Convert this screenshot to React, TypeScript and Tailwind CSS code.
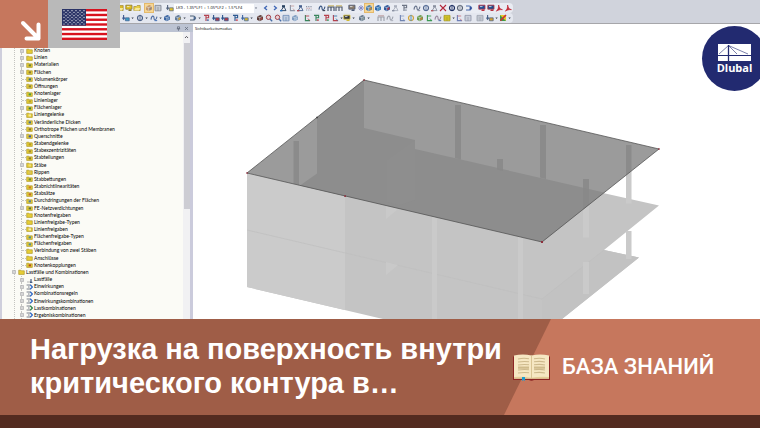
import { clsx } from "clsx";

type Tool = { name: string; kind: string; c: string; d?: string; on?: boolean; menu?: boolean };
type ToolGroup = { width: string; tools: Tool[] };

const t = (name: string, kind: string, c: string, d?: string, extra?: Partial<Tool>): Tool => ({
  name,
  kind,
  c,
  d,
  ...extra,
});

const fileTools: ToolGroup[] = [
  {
    width: "w-[25px]",
    tools: [
      t("Neu", "folder", "#d9b92c"),
      t("Öffnen", "screen", "#e3c21f", "#8a7a32"),
      t("Speichern", "folder", "#e8cf45"),
    ],
  },
  {
    width: "w-[17px]",
    tools: [t("Navigator", "cube", "#c79a6b", "#8c8684", { on: true }), t("Tabellen", "table", "#7a7f8c")],
  },
  { width: "w-2", tools: [t("Lastfall", "load", "#56657f", "#e0c02a")] },
];

const viewTools: ToolGroup[] = [
  {
    width: "w-[51px]",
    tools: [
      t("Zurück", "left", "#3f66b5"),
      t("Weiter", "right", "#3f66b5"),
      t("Lasten", "person", "#26405f", "#2a6fb8"),
      t("Werte", "axes", "#8c94a5", "#c4a2a2"),
      t("Ergebnisse", "person", "#46608d", "#b04a55"),
      t("Skala", "dots", "#8f97a8", "#c39aa0"),
    ],
  },
  {
    width: "w-[25px]",
    tools: [
      t("Brille", "curve", "#35527e", "#3a4152"),
      t("Verformung", "frame", "#3c4a63", "#c1a53d"),
      t("Schnitt", "frame", "#4c5668", "#c1a53d"),
    ],
  },
  {
    width: "w-[60px]",
    tools: [
      t("Modell", "screen", "#8c7d6b", "#4c5a76"),
      t("Optionen", "star", "#7d83bd"),
      t("Flächen", "cube", "#4f7ea7", "#c98a2c", { on: true }),
      t("Stäbe", "cube", "#2c66a8", "#4e9cc4"),
      t("Körper", "cube", "#2d579b", "#b8323e"),
      t("Lager", "person", "#aab0bd", "#8a91a2"),
      t("Text", "flag", "#6c7484", "#9aa2b1"),
    ],
  },
  {
    width: "w-[60px]",
    tools: [
      t("Drehen", "curve", "#65718a", "#8c94a5"),
      t("Kreis", "ring", "#51658d", "#5f7ca8"),
      t("Spiegeln", "person", "#8a91a0", "#b55b62"),
      t("Löschen", "cross", "#b2263a"),
      t("Kugel", "ring", "#1d2d5e", "#25366e"),
      t("Kamera", "ring", "#5b6475", "#8a8f99"),
      t("Filter", "arrow", "#4968ac", "#2f4f9b"),
    ],
  },
  {
    width: "w-[34px]",
    tools: [
      t("Bericht", "screen", "#1c4f97", "#c0303f"),
      t("Drucken", "screen", "#1d4d8c", "#b6323f"),
      t("PDF", "pdf", "#c02734"),
      t("Export", "pdf", "#c02734"),
    ],
  },
];

const modelTools: ToolGroup[] = [
  {
    width: "w-[63px]",
    tools: [
      t("Knoten setzen", "load", "#3e5b92", "#3e9cc0", { menu: true }),
      t("Linie setzen", "ring", "#4b6188", "#4b6188", { menu: true }),
      t("Stab setzen", "curve", "#4d6ba0", "#4d79b9", { menu: true }),
      t("Fläche setzen", "cube", "#3762a1", "#7a9cc4"),
      t("Körper setzen", "cube", "#5d7796", "#d4a63a", { menu: true }),
    ],
  },
  {
    width: "w-[63px]",
    tools: [
      t("Bogen", "arrow", "#4a6077", "#4c6a94", { menu: true }),
      t("Knotenlast", "flag", "#b44451", "#4466a3"),
      t("Linienlast", "load", "#31558b", "#b23c47"),
      t("Stablast", "load", "#2d568f", "#b23c47"),
      t("Flächenlast", "flag", "#2e5a91", "#cc4650"),
      t("Freie Last", "load", "#3e67a2", "#d3b238", { menu: true }),
    ],
  },
  {
    width: "w-[43px]",
    tools: [
      t("Auswahl", "cube", "#5b3a35", "#a64442"),
      t("Zoom", "zoom", "#a3434b", "#456ca5"),
      t("Zoom Fenster", "zoom", "#a3434b", "#456ca5"),
      t("Ansicht", "table", "#6788b2"),
      t("Isometrie", "cube", "#7d9bc0", "#b1c6dc"),
    ],
  },
  {
    width: "w-[51px]",
    tools: [
      t("Ansicht X", "axes", "#39855c", "#b6424d"),
      t("Ansicht Y", "flag", "#39855c", "#b6424d"),
      t("Ansicht Z", "flag", "#b6424d", "#39955c"),
      t("Ansicht -X", "axes", "#b6424d", "#3c78aa", { menu: true }),
      t("Raster", "screen", "#31333a", "#d1ba33", { menu: true }),
    ],
  },
  { width: "w-[15px]", tools: [t("Netz", "cube", "#64788a", "#8fa3a1", { menu: true })] },
  { width: "w-[17px]", tools: [t("Rahmen", "frame", "#9a9fa8", "#b48c8c"), t("Platte", "curve", "#9ba0ab", "#b0b4be")] },
  {
    width: "w-[74px]",
    tools: [
      t("Achsen", "axes", "#6f83b0", "#8fa1c9"),
      t("Spannung", "ring", "#d1a339", "#3e91c8"),
      t("Farben", "cube", "#6a9c4a", "#c97c3d"),
      t("Richtung", "axes", "#3d9a53", "#3d9a53"),
      t("Verlauf", "curve", "#9a8ba0", "#5f79b3"),
      t("Matrix", "table", "#a49a24", "#e2d02e", { menu: true }),
      t("Koordinaten", "axes", "#6d7fb7", "#c57681"),
      t("Gitter", "table", "#8a92a4"),
    ],
  },
  {
    width: "w-[34px]",
    tools: [
      t("Dokument", "table", "#9aa1ad", "#d1d5de"),
      t("Bearbeiten", "load", "#465f86", "#d1a030", { menu: true }),
      t("Isoflächen", "palette", "#c8313a", "#e7c927", { menu: true }),
    ],
  },
];

type Node = { label: string; icon?: string; open?: boolean; root?: boolean };

const tree: Node[] = [
  { label: "Knoten", open: true },
  { label: "Linien", open: true },
  { label: "Materialien", icon: "#6f7d3a", open: true },
  { label: "Flächen", icon: "#8a7a34", open: true },
  { label: "Volumenkörper", icon: "#3c6c86" },
  { label: "Öffnungen", icon: "#86803f" },
  { label: "Knotenlager", icon: "#4d9a3d" },
  { label: "Linienlager", icon: "#b5a02c" },
  { label: "Flächenlager", icon: "#3f7f3a", open: true },
  { label: "Liniengelenke", icon: "#f4e9a0" },
  { label: "Veränderliche Dicken", icon: "#47708f" },
  { label: "Orthotrope Flächen und Membranen", icon: "#8b7433" },
  { label: "Querschnitte", icon: "#3f55a8", open: true },
  { label: "Stabendgelenke", icon: "#b69b1e" },
  { label: "Stabexzentrizitäten", icon: "#a08a30" },
  { label: "Stabteilungen", icon: "#8b7a2a" },
  { label: "Stäbe", icon: "#f1de77", open: true },
  { label: "Rippen", icon: "#d8c262" },
  { label: "Stabbettungen", icon: "#6f8c39" },
  { label: "Stabnichtlinearitäten", icon: "#c9792a" },
  { label: "Stabsätze", icon: "#c0672c" },
  { label: "Durchdringungen der Flächen", icon: "#54819c" },
  { label: "FE-Netzverdichtungen", icon: "#5b6f3f", open: true },
  { label: "Knotenfreigaben" },
  { label: "Linienfreigabe-Typen" },
  { label: "Linienfreigaben", icon: "#f1e9b8" },
  { label: "Flächenfreigabe-Typen", icon: "#4f8a94" },
  { label: "Flächenfreigaben", icon: "#4f8a94" },
  { label: "Verbindung von zwei Stäben" },
  { label: "Anschlüsse" },
  { label: "Knotenkopplungen", icon: "#b0501f" },
  { label: "Lastfälle und Kombinationen", open: true, root: true },
  { label: "Lastfälle", icon: "load", open: true },
  { label: "Einwirkungen", icon: "combo-blue", open: true },
  { label: "Kombinationsregeln", icon: "combo-blue", open: true },
  { label: "Einwirkungskombinationen", icon: "combo-blue", open: true },
  { label: "Lastkombinationen", icon: "combo-green", open: true },
  { label: "Ergebniskombinationen", icon: "combo-blue", open: true },
];

const ToolIcon = ({ kind, c, d = c }: { kind: string; c: string; d?: string }) => (
  <svg viewBox="0 0 8 8" className="h-2 w-2 shrink-0" fill="none" stroke={c} strokeWidth="1.1">
    {kind === "folder" && (
      <>
        <path d="M.8 2.5h2.4l1-1h3v5H.8z" fill={c} stroke="#9a8127" strokeWidth=".6" />
        <path d="M2.6 4h4.6L6 6.6H1z" fill="#f6e89b" stroke="none" />
      </>
    )}
    {kind === "screen" && (
      <>
        <path d="M.8 1.2h6.2v4H.8z" fill={c} stroke={d} strokeWidth=".8" />
        <path d="M3 7l2-2 2 2z" fill={d} stroke="none" />
        <path d="M2 2.6h2.5" stroke="#e9eef5" strokeWidth=".8" />
      </>
    )}
    {kind === "cube" && (
      <>
        <path d="M1 2.6L4.5 1 7 2.2v3.4L3.8 7.2 1 5.8z" fill={c} stroke="none" />
        <path d="M1 2.6l2.8 1L7 2.2M3.8 3.6v3.6" stroke="#dfe5ec" strokeWidth=".6" />
        <path d="M4.4 4l2-.8v2l-2 1z" fill={d} stroke="none" />
      </>
    )}
    {kind === "table" && (
      <>
        <path d="M1 1.4h6v5.4H1z" fill={d === c ? "#e6eaf1" : d} strokeWidth=".8" />
        <path d="M1 3h6M1 5h6M4 3v4" strokeWidth=".6" />
      </>
    )}
    {kind === "load" && (
      <>
        <path d="M1.6 1v3.8M.5 3.6l1.1 1.6 1.2-1.6" />
        <path d="M3.4 3.8h3.8v3H3.4z" fill={d} strokeWidth=".7" />
      </>
    )}
    {kind === "person" && (
      <>
        <path d="M3 1.2h3v2.3H3z" fill={c} stroke="none" />
        <path d="M4.4 3.2L2 6.6h5L5.4 3.4" strokeWidth=".9" />
        <path d="M1 6h2.4v1.4H1z" fill={d} stroke="none" />
      </>
    )}
    {kind === "axes" && (
      <>
        <path d="M2.4 1v5.6H7" />
        <path d="M2.6 2h3.6M5 4.6l1.8 2" stroke={d} strokeWidth=".9" />
      </>
    )}
    {kind === "dots" && (
      <>
        <path d="M1 2.6h6M1 6h6" strokeDasharray="1 .8" />
        <path d="M1.4 4.2h5" stroke={d} strokeDasharray="1.4 .8" />
      </>
    )}
    {kind === "curve" && (
      <>
        <path d="M1 5.6C1.6 1 4 1.4 4 4s2 3 3-1.4" />
        <path d="M4.6 6.6h2.6" stroke={d} />
      </>
    )}
    {kind === "frame" && (
      <>
        <path d="M1 7V3h6v4M4 3v4" />
        <path d="M1 1.8h6" stroke={d} strokeWidth=".8" />
      </>
    )}
    {kind === "star" && <path d="M4 1v6M1 4h6M2 2l4 4M6 2L2 6" strokeWidth=".8" />}
    {kind === "flag" && (
      <>
        <path d="M2 1.4h4.6v2.4H4M4 2v5" />
        <path d="M4.8 5.4h2v1.4h-2z" fill={d} stroke="none" />
      </>
    )}
    {kind === "ring" && (
      <>
        <circle cx="4" cy="4" r="2.5" strokeWidth="1.2" />
        <path d="M4 .8v6.4" stroke={d} strokeWidth=".9" />
      </>
    )}
    {kind === "cross" && <path d="M1 1l6 6M7 1L1 7" strokeWidth="1.1" />}
    {kind === "arrow" && (
      <>
        <path d="M1 2h3c3 0 3 4 0 4H1" />
        <path d="M4.6 2.4L7.4 4 4.6 6z" fill={d} stroke="none" />
      </>
    )}
    {kind === "zoom" && (
      <>
        <circle cx="3.5" cy="3.3" r="2.2" strokeWidth="1" fill="#e6cfd4" />
        <path d="M5 5l2.2 2.2" stroke={d} strokeWidth="1.3" />
      </>
    )}
    {kind === "pdf" && <path d="M3.6 1c.6 3 1.6 4.4 3.8 4.6C5 5.4 3 6 1.4 7.2 3 5.4 3.8 3.8 3.6 1z" fill={c} strokeWidth=".7" />}
    {kind === "palette" && (
      <>
        <path d="M1 1h6v6H1z" fill={d} stroke="none" />
        <path d="M1 1l6 6H1z" fill="#3d9a4c" stroke="none" />
        <path d="M7 1L1.4 6.6" strokeWidth="1.6" />
      </>
    )}
    {kind === "left" && <path d="M5 2L2.6 4 5 6" strokeWidth="1.3" />}
    {kind === "right" && <path d="M3 2l2.4 2L3 6" strokeWidth="1.3" />}
  </svg>
);

const ToolButtons = ({ groups }: { groups: ToolGroup[] }) => (
  <>
    {groups.map((group, i) => (
      <div key={i} className={clsx("flex shrink-0 justify-between", group.width)}>
        {group.tools.map((tool) => (
          <button
            key={tool.name}
            aria-label={tool.name}
            className={clsx("flex items-center", tool.on && "bg-[#f6d795] ring-1 ring-[#e5b96b]")}
          >
            <ToolIcon kind={tool.kind} c={tool.c} d={tool.d} />
            {tool.menu && (
              <svg viewBox="0 0 4 4" className="-mr-px h-1 w-1">
                <path d="M1.4 1.5h2.4L2.6 3z" fill="#3f4654" />
              </svg>
            )}
          </button>
        ))}
      </div>
    ))}
  </>
);

const Toolbars = () => (
  <div className="border-b border-[#a6a6aa] bg-[#d0d3dc] pt-[3px]">
    <div className="flex h-[10px] w-[513px] items-center rounded-r-sm bg-[#e9ecf3] pl-[116px]">
      <div className="flex shrink-0 items-center gap-1">
        <ToolButtons groups={fileTools} />
      </div>
      <select
        aria-label="Lastkombination"
        className="h-[9px] w-20 shrink-0 appearance-none bg-white pl-[2px] text-[4px] leading-none text-black"
      >
        <option>LK9 - 1.35*LF1 + 1.05*LF2 + 1.5*LF4</option>
      </select>
      <svg viewBox="0 0 4 4" className="h-1 w-1 shrink-0">
        <path d="M.8 1.5h2.4L2 3z" fill="#6b7180" />
      </svg>
      <div className="ml-1 flex items-center gap-[5px]">
        <ToolButtons groups={viewTools} />
      </div>
    </div>
    <div className="flex h-[10px] w-[513px] items-center gap-1 rounded-r-sm bg-[#e4e7ef] pl-[122px]">
      <ToolButtons groups={modelTools} />
    </div>
  </div>
);

const NodeIcon = ({ icon }: { icon?: string }) => {
  if (icon === "load") {
    return (
      <svg viewBox="0 0 7 6" className="h-[6px] w-[7px] shrink-0" fill="none">
        <path d="M1 5h4" stroke="#9a9a9a" strokeWidth=".7" />
        <path d="M5 2v3.4M4 5.3h2.4" stroke="#27416f" />
      </svg>
    );
  }
  if (icon?.startsWith("combo")) {
    return (
      <svg viewBox="0 0 7 6" className="h-[6px] w-[7px] shrink-0" fill="none">
        <path d="M.6 1h3.8M.6 5h3.8M2 3h1.6" stroke="#59616e" strokeWidth=".8" />
        <path d="M4.2.8L6.4 3 4.2 5.2" stroke={icon === "combo-green" ? "#2e8446" : "#2f68c4"} strokeWidth="1.3" />
      </svg>
    );
  }
  return (
    <svg viewBox="0 0 7 6" className="h-[6px] w-[7px] shrink-0">
      <path d="M.7 1.2h2.2l.6.6h2.8v3.6H.7z" fill="#e6cd35" stroke="#a58f22" strokeWidth=".6" />
      {icon && <path d="M2.6 2.4h2.4v2H2.6z" fill={icon} />}
    </svg>
  );
};

const TreePane = () => (
  <aside className="flex w-[193px] shrink-0 flex-col border-l-2 border-[#cfcfdc] bg-[#cbcbdc]">
    <div className="flex h-2 items-center justify-end gap-[3px] bg-[#bcc3d2] pr-1">
      <button aria-label="Anheften" className="flex">
        <svg viewBox="0 0 5 5" className="h-[5px] w-[5px]" fill="none" stroke="#5d6577" strokeWidth=".7">
          <path d="M1.5.8h2v2h-2zM.8 2.8h3.4M2.5 2.8v2" />
        </svg>
      </button>
      <button aria-label="Schließen" className="flex">
        <svg viewBox="0 0 5 5" className="h-[5px] w-[5px]" stroke="#5d6577" strokeWidth=".7">
          <path d="M1 1l3 3M4 1L1 4" />
        </svg>
      </button>
    </div>
    <div className="mr-[3px] flex flex-1 bg-[#fbfbf6]">
      <ul className="ml-3 flex flex-1 flex-col border-l border-dotted border-[#c4c4c0] pt-[15px] font-['Lato','Open_Sans',sans-serif]">
        {tree.map((node) => (
          <li
            key={node.label}
            className={clsx(
              "flex flex-1 items-center text-[5px] leading-[7px] whitespace-nowrap text-black",
              !node.root && "pl-[6px]"
            )}
          >
            <span
              className={clsx(
                "flex h-full w-[5px] shrink-0 items-center",
                node.root ? "-ml-[3px]" : "border-l border-dotted border-[#c4c4c0]"
              )}
            >
              {node.open ? (
                <svg viewBox="0 0 4 4" className={clsx("h-1 w-1 shrink-0", !node.root && "-ml-[2px]")}>
                  <path d="M.5.5h3v3h-3z" fill="#f2f2f2" stroke="#9c9ca0" strokeWidth=".6" />
                  <path d="M1.2 2h1.6" stroke="#666" strokeWidth=".5" />
                </svg>
              ) : (
                <span className="w-1 border-t border-dotted border-[#c4c4c0]" />
              )}
            </span>
            <span className={clsx("mr-px flex", node.root && "ml-px")}>
              <NodeIcon icon={node.icon} />
            </span>
            {node.label}
          </li>
        ))}
      </ul>
      <div className="flex w-[7px] flex-col items-center bg-[#f1f1f3]">
        <svg viewBox="0 0 7 11" className="h-[11px] w-[7px]" fill="none" stroke="#4b4b50" strokeWidth=".9">
          <path d="M2 6l1.5-1.6L5 6" />
        </svg>
        <div className="h-[58%] w-[6px] bg-[#cdcdd3]" />
      </div>
    </div>
  </aside>
);

const Model = () => (
  <svg viewBox="193 24 567 295" preserveAspectRatio="xMidYMid slice" className="absolute inset-0 h-full w-full">
    <path d="M247 173L542 242 603 193 659 205.5 604 250 639 257.5 562 319 383 319 247 287z" fill="#c4c4c4" />
    <path d="M247 173l98 23v114l-98-23z" fill="#cbcbcb" />
    <path d="M604 250l35 7.5-77 61.5h-20v-20z" fill="#c2c2c2" />
    <path d="M247 230l295 69 62-49" fill="none" stroke="#bebebe" strokeWidth=".7" />
    <path d="M386 206v13l12-10zM386 262v13l12-10z" fill="#c9c9c9" />
    <path
      d="M432 216h5v103h-5zM518 236h5v83h-5zM583 206h6v31.5h-6zM583 262h6v32h-6zM626 168h5.5v35.5H626zM626 231h5.5v28H626z"
      fill="#cacaca"
    />
    <path d="M364 80l295 69-117 93-295-69z" fill="#9b9b9b" />
    <path d="M317 117.5L364 80v48l51 12v9l189 43.5-62 49.5-242-56.6 17-12z" fill="#8d8d8d" />
    <path d="M387 160l28-20v60l-15 5-13-3z" fill="#8e8e8e" />
    <path
      d="M293.5 141h5.5v44l-5.5-1.4zM455 105h6v54.5l-6-1.5zM497 159h6v12l-6-1.4zM540 125h6v54l-6-1.5zM583 179h6v25.5l-6 5zM626 145h5.5v25.5l-5.5 4.5z"
      fill="#888"
      opacity=".85"
    />
    <path d="M364 80l295 69-117 93-295-69z" fill="none" stroke="#555" strokeWidth=".8" />
    <path
      d="M363.3 79.3h1.5v1.5h-1.5zM658.2 148.2h1.5v1.5h-1.5zM246.3 172.3h1.5v1.5h-1.5zM344.3 195.3h1.6v1.6h-1.6zM541 241h2v2h-2z"
      fill="#8e2f3c"
    />
    <path d="M316.3 116.8h1.4v1.4h-1.4z" fill="#333" />
  </svg>
);

const Logo = () => (
  <a
    href="#"
    className="absolute top-[26px] -right-[7px] flex h-[65px] w-[65px] flex-col items-center rounded-full bg-[#222a70] pt-[18px] font-['Open_Sans','Noto_Sans',sans-serif] text-[11px] leading-[14px] font-bold text-white"
  >
    <svg viewBox="0 0 33 17" className="h-[17px] w-[33px]" fill="none">
      <path d="M0 0h33v17H0z" fill="#fff" />
      <path d="M0 11.5h33" stroke="#222a70" strokeWidth="1.2" />
      <path d="M10.5 1v16" stroke="#222a70" strokeWidth="1.3" />
      <path d="M1 10L10.5 1.5 19 10M10.500 1.500L30 10" stroke="#222a70" strokeWidth=".6" />
    </svg>
    Dlubal
  </a>
);

const Badges = () => (
  <div className="absolute top-0 left-0 flex">
    <div className="h-12 w-12 bg-[#c6775d]">
      <svg viewBox="0 0 48 48" className="h-12 w-12" fill="none" stroke="#fff" strokeWidth="4" strokeLinecap="round" strokeLinejoin="round">
        <path d="M23 23l15.5 15.5M38.5 24.5v14H26.5" />
      </svg>
    </div>
    <div className="flex h-12 w-[72px] items-center justify-center bg-[#b9b9b9]">
      <svg viewBox="0 0 45 31" className="h-[31px] w-[45px]">
        <path d="M0 0h45v31H0z" fill="#fff" />
        {[0, 2, 4, 6, 8, 10, 12].map((n) => (
          <rect key={n} y={(n * 31) / 13} width="45" height={31 / 13} fill="#d8121e" />
        ))}
        <path d="M0 0h24v16.7H0z" fill="#2b3467" />
        {Array.from({ length: 9 }, (_, row) =>
          Array.from({ length: row % 2 ? 5 : 6 }, (_, col) => (
            <circle key={`${row}-${col}`} cx={2 + col * 4 + (row % 2 ? 2 : 0)} cy={1.7 + row * 1.66} r=".6" fill="#fff" />
          ))
        )}
      </svg>
    </div>
  </div>
);

const Book = () => (
  <svg viewBox="0 0 37 27" className="h-[27px] w-[37px] shrink-0">
    <path d="M0 2.5h37V26H21q-2.5 1.4-5 0H0z" fill="#8c2424" />
    <path d="M1 1.5Q10-.5 18.5 1.5 27-.5 36 1.5v23H1z" fill="#f6e7c3" />
    <path d="M1 23q9-1 17.5.8Q27 22 36 23v1.8H1z" fill="#e4cc98" />
    <path d="M18.5 1.5v22.5" stroke="#d9c494" strokeWidth="1" />
    <path
      d="M5 5q6-1.4 11-.2M5 8q6-1 11-.2M5 11q6-1 11-.2M5 16q6-1 11-.2M5 19q6-1 11-.2M21 4.8q6-1.2 11 .2M21 7.8q6-1 11 .2M21 10.8q6-1 11 .2M21 15.8q6-1 11 .2M21 18.8q6-1 11 .2"
      fill="none"
      stroke="#cdb98c"
      strokeWidth="1.1"
    />
    <path d="M5 12.5h11v2.2H5zM21 12.5h11v2.2H21z" fill="#cfbb8c" />
    <path d="M9 23h3v4l-1.5-1L9 27z" fill="#1a9bd0" />
  </svg>
);

const Banner = () => (
  <footer className="border-b-[13px] border-[#532b20] bg-[#9f5d47]">
    <div className="flex h-24">
      <h1 className="min-w-0 flex-1 pt-[13px] pl-[30px] font-['Liberation_Sans',Arial,sans-serif] text-[29px] leading-[34px] font-bold whitespace-nowrap text-white">
        Нагрузка на поверхность внутри
        <br />
        критического контура в…
      </h1>
      <div className="relative flex w-64 shrink-0 items-center pl-[9px]">
        <div className="absolute inset-0 bg-[#c6775d] [clip-path:polygon(47px_0,100%_0,100%_100%,0_100%)]" />
        <div className="relative flex items-center gap-3">
          <Book />
          <span className="font-['Roboto',sans-serif] text-[22px] leading-7 font-medium whitespace-nowrap text-white">БАЗА ЗНАНИЙ</span>
        </div>
      </div>
    </div>
  </footer>
);

export default function App() {
  return (
    <div className="relative flex min-h-screen flex-col overflow-hidden bg-white font-['Open_Sans','Noto_Sans',sans-serif]">
      <Toolbars />
      <main className="flex flex-1">
        <TreePane />
        <section className="relative flex-1 bg-white">
          <Model />
          <p className="relative pt-[2px] pl-[2px] text-[4px] leading-[6px] font-medium text-black">Sichtbarkeitsmodus</p>
        </section>
      </main>
      <Banner />
      <Badges />
      <Logo />
    </div>
  );
}
